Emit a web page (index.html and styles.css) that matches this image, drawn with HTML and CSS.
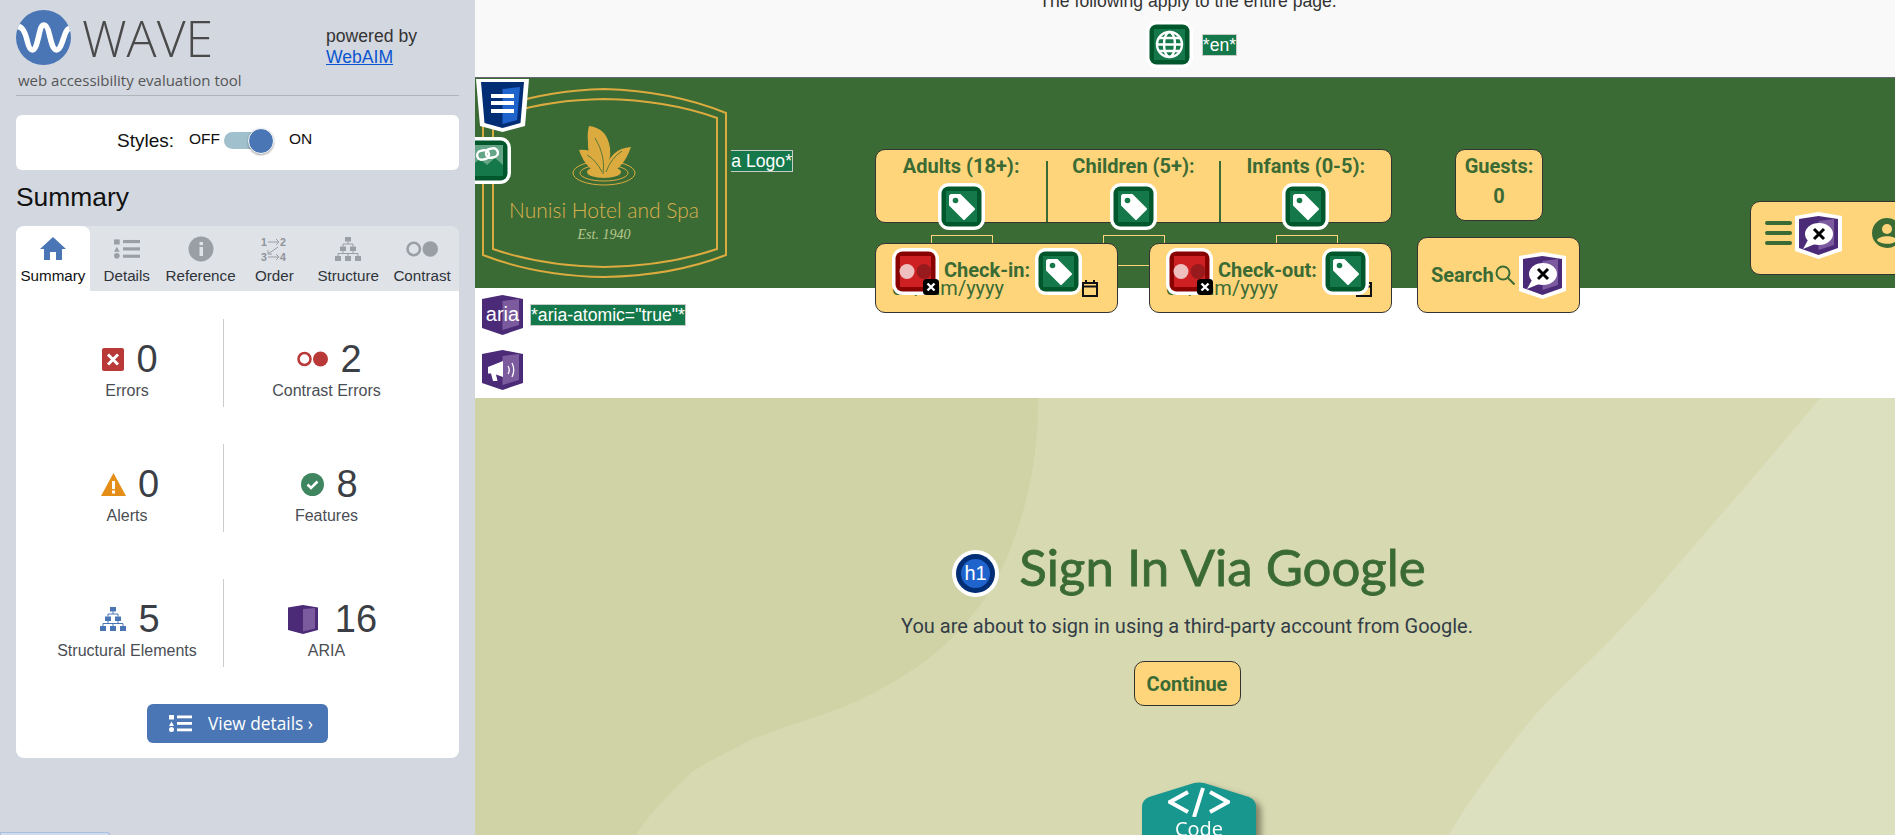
FILE: index.html
```html
<!DOCTYPE html>
<html lang="en">
<head>
<meta charset="utf-8">
<title>Sign In Via Google - WAVE</title>
<link rel="stylesheet" href="styles.css">
</head>
<body>
<svg class="defs" width="0" height="0" aria-hidden="true">
  <symbol id="i-tag" viewBox="0 0 47 47">
    <rect width="47" height="47" rx="11" fill="#fff"/>
    <rect x="3.500" y="3.500" width="40" height="40" rx="7" fill="#00572c"/>
    <rect x="8" y="8" width="31" height="31" fill="#15784a"/>
    <path d="M13 12H22L36 26L26 36L12 22V13Z" fill="#fff" stroke="#fff" stroke-width="2" stroke-linejoin="round"/>
    <circle cx="17.500" cy="17.500" r="2.800" fill="#15784a"/>
  </symbol>
  <symbol id="i-globe" viewBox="0 0 47 47">
    <rect width="47" height="47" rx="11" fill="#fff"/>
    <rect x="3.500" y="3.500" width="40" height="40" rx="7" fill="#00572c"/>
    <rect x="8" y="8" width="31" height="31" fill="#15784a"/>
    <g fill="none" stroke="#fff" stroke-width="2.400">
      <circle cx="23.500" cy="23.500" r="12.500"/>
      <ellipse cx="23.500" cy="23.500" rx="5.500" ry="12.500"/>
      <path d="M11 23.500H36M13 17H34M13 30H34"/>
    </g>
  </symbol>
  <symbol id="i-link" viewBox="0 0 47 47">
    <rect width="47" height="47" rx="11" fill="#fff"/>
    <rect x="3.500" y="3.500" width="40" height="40" rx="7" fill="#00572c"/>
    <rect x="8" y="8" width="31" height="31" fill="#15784a"/>
    <path d="M8 8H39V28L31 21L23 28L16 22L8 28Z" fill="#63a586"/>
    <g fill="none" stroke="#fff" stroke-width="2.400" transform="rotate(-12 23.500 17)">
      <rect x="13" y="12.500" width="12" height="9" rx="4.500"/>
      <rect x="22" y="12.500" width="12" height="9" rx="4.500"/>
    </g>
  </symbol>
  <symbol id="i-contrast" viewBox="0 0 47 47">
    <rect width="47" height="47" rx="11" fill="#fff"/>
    <rect x="3.500" y="3.500" width="40" height="40" rx="7" fill="#890202"/>
    <rect x="8" y="8" width="31" height="31" fill="#ce2022"/>
    <circle cx="15" cy="23.500" r="7.500" fill="#efbfc0"/>
    <circle cx="32" cy="23.500" r="7.500" fill="#981a1c"/>
  </symbol>
  <symbol id="i-x" viewBox="0 0 16 16">
    <rect width="16" height="16" rx="3.500" fill="#000"/>
    <path d="M4.500 4.500L11.500 11.500M11.500 4.500L4.500 11.500" stroke="#fff" stroke-width="2.400"/>
  </symbol>
  <symbol id="i-discern" viewBox="0 0 47 47">
    <path d="M0 4L23.500 0L47 4V39L23.500 47L0 39Z" fill="#fff"/>
    <path d="M4 7L23.500 4L43 7V36L23.500 43L4 36Z" fill="#4b2a78"/>
    <path d="M23.500 9L39 7V33L23.500 38Z" fill="#7b5a9e"/>
    <ellipse cx="24" cy="22" rx="14" ry="11" fill="#fff"/>
    <path d="M13 28L8 37L20 32Z" fill="#fff"/>
    <path d="M19 17L29 27M29 17L19 27" stroke="#000" stroke-width="3"/>
  </symbol>
  <symbol id="i-box" viewBox="0 0 41 40">
    <path d="M0 4L20.500 0L41 4V33L20.500 40L0 33Z" fill="#4b2a78"/>
    <path d="M20.500 6L37 4V30L20.500 35Z" fill="#7b5a9e"/>
  </symbol>
  <symbol id="i-list" viewBox="0 0 23 17">
    <rect x="0" y="0" width="5" height="4.500" fill="currentColor"/>
    <path d="M2.500 6.500L5 11H0Z" fill="currentColor"/>
    <circle cx="2.500" cy="14.500" r="2.500" fill="currentColor"/>
    <rect x="8" y="0.500" width="15" height="2.800" fill="currentColor"/>
    <rect x="8" y="7" width="15" height="2.800" fill="currentColor"/>
    <rect x="8" y="13.500" width="15" height="2.800" fill="currentColor"/>
  </symbol>
  <symbol id="i-struct" viewBox="0 0 26 24">
    <g fill="currentColor">
      <rect x="10" y="0" width="6" height="4.500"/>
      <rect x="5" y="9.500" width="6" height="4.500"/>
      <rect x="15" y="9.500" width="6" height="4.500"/>
      <rect x="0" y="19" width="6" height="5"/>
      <rect x="10" y="19" width="6" height="5"/>
      <rect x="20" y="19" width="6" height="5"/>
    </g>
    <path d="M13 4.500V7M8 9.500V7H18V9.500M8 14V16.500M18 14V16.500M3 19V16.500H23V19M13 16.500V19" fill="none" stroke="currentColor" stroke-width="1"/>
  </symbol>
</svg>

<aside class="wave">
  <header class="wave-head">
    <svg class="wave-logo" viewBox="0 0 55 55" aria-hidden="true">
      <defs><clipPath id="circle-clip"><circle cx="27.500" cy="27.500" r="27.500"/></clipPath></defs>
      <circle cx="27.500" cy="27.500" r="27.500" fill="#4a76b5"/>
      <path clip-path="url(#circle-clip)" d="M0 17C6 15 9 22 11 30C12.500 37 14 40 16.500 40C19.500 40 21 33 23 25C24.500 18 25.500 15 28 15C30.500 15 32 18 33.500 25C35.500 33 37 40 40.500 40C44 40 46 33 48 27C50 20 52 18 56 18" fill="none" stroke="#fff" stroke-width="5.500"/>
    </svg>
    <span class="wave-name">WAVE</span>
    <p class="powered">powered by<br><a href="#">WebAIM</a></p>
  </header>
  <p class="tagline">web accessibility evaluation tool</p>

  <section class="styles-card">
    <span class="styles-label">Styles:</span>
    <span class="off">OFF</span>
    <span class="toggle"><span class="knob"></span></span>
    <span class="on">ON</span>
  </section>

  <h2 class="summary-title">Summary</h2>

  <nav class="tabs">
    <a class="tab tab-active">
      <svg class="tab-icon" viewBox="0 0 26 24"><path d="M13 0L26 12H22V23H16V15H10V23H4V12H0Z" fill="currentColor"/></svg>
      Summary
    </a>
    <a class="tab"><svg class="tab-icon"><use href="#i-list"/></svg>Details</a>
    <a class="tab">
      <svg class="tab-icon" viewBox="0 0 26 26"><circle cx="13" cy="13" r="12.500" fill="currentColor"/><rect x="11.500" y="11" width="3.500" height="9" fill="#dfe2e7"/><rect x="11.500" y="6" width="3.500" height="3.200" fill="#dfe2e7"/></svg>
      Reference
    </a>
    <a class="tab">
      <svg class="tab-icon" viewBox="0 0 26 26">
        <text class="order-digits" x="0" y="10">1</text><text class="order-digits" x="19" y="10">2</text>
        <text class="order-digits" x="0" y="25">3</text><text class="order-digits" x="19" y="25">4</text>
        <path d="M7 6H18M15 3L18 6L15 9M7 21H18M15 18L18 21L15 24M17 11L7 18M7 14V18H11" fill="none" stroke="currentColor" stroke-width="1"/>
      </svg>
      Order
    </a>
    <a class="tab"><svg class="tab-icon"><use href="#i-struct"/></svg>Structure</a>
    <a class="tab">
      <svg class="tab-icon tab-icon-wide" viewBox="0 0 31 16"><circle cx="7.500" cy="8" r="6" fill="none" stroke="currentColor" stroke-width="2.500"/><circle cx="23.500" cy="8" r="7.500" fill="currentColor"/></svg>
      Contrast
    </a>
  </nav>

  <section class="stats">
    <div class="stat-row">
      <div class="stat">
        <div class="figure">
          <svg class="stat-icon" width="22" height="23" viewBox="0 0 22 23"><rect width="22" height="23" rx="2" fill="#b93838"/><path d="M6 6.500L16 16.500M16 6.500L6 16.500" stroke="#fff" stroke-width="3"/></svg>
          <span class="num">0</span>
        </div>
        <span class="stat-label">Errors</span>
      </div>
      <div class="stat stat-right">
        <div class="figure">
          <svg class="stat-icon" width="31" height="16" viewBox="0 0 31 16"><circle cx="7.500" cy="8" r="6" fill="none" stroke="#b93838" stroke-width="2.500"/><circle cx="23.500" cy="8" r="7.500" fill="#b93838"/></svg>
          <span class="num">2</span>
        </div>
        <span class="stat-label">Contrast Errors</span>
      </div>
    </div>
    <div class="stat-row stat-row-wide">
      <div class="stat">
        <div class="figure">
          <svg class="stat-icon" width="25" height="23" viewBox="0 0 25 23"><path d="M12.500 0L25 23H0Z" fill="#e58e17"/><rect x="11" y="8" width="3" height="8" fill="#fff"/><rect x="11" y="17.500" width="3" height="3" fill="#fff"/></svg>
          <span class="num">0</span>
        </div>
        <span class="stat-label">Alerts</span>
      </div>
      <div class="stat stat-right">
        <div class="figure">
          <svg class="stat-icon" width="23" height="23" viewBox="0 0 23 23"><circle cx="11.500" cy="11.500" r="11.500" fill="#3f8560"/><path d="M6.500 11.500L10 15L16.500 8.500" fill="none" stroke="#fff" stroke-width="2.500"/></svg>
          <span class="num">8</span>
        </div>
        <span class="stat-label">Features</span>
      </div>
    </div>
    <div class="stat-row">
      <div class="stat">
        <div class="figure">
          <svg class="stat-icon stat-struct" width="26" height="24"><use href="#i-struct"/></svg>
          <span class="num">5</span>
        </div>
        <span class="stat-label">Structural Elements</span>
      </div>
      <div class="stat stat-right">
        <div class="figure figure-aria">
          <svg class="stat-icon" width="30" height="29" viewBox="0 0 30 29"><path d="M0 2.500L15 0L30 2.500V25L15 29L0 25Z" fill="#4b2a78"/><path d="M15 4L27 3V23.500L15 26.500Z" fill="#7b5a9e"/></svg>
          <span class="num">16</span>
        </div>
        <span class="stat-label">ARIA</span>
      </div>
    </div>
    <a class="details-btn">
      <svg class="details-icon"><use href="#i-list"/></svg>
      View details ›
    </a>
  </section>
  <div class="peek-tab"></div>
</aside>

<main class="page">
  <section class="page-note">
    <p class="note-text">The following apply to the entire page.</p>
    <div class="note-row">
      <svg class="wicon"><use href="#i-globe"/></svg>
      <span class="wlabel">*en*</span>
    </div>
  </section>

  <header class="site-header">
    <div class="brand">
      <svg class="hotel-logo" viewBox="0 0 245 190" role="img" aria-label="Nunisi Hotel and Spa Logo">
        <g fill="none" stroke="#dcab3f" stroke-width="2">
          <path d="M122 1Q190 3 244 25V167Q190 188 122 189Q55 188 1 167V25Q55 3 122 1Z"/>
          <path d="M122 11Q185 12 235 30V161Q185 178 122 179Q60 178 11 161V30Q60 12 122 11Z"/>
          <ellipse cx="122" cy="85" rx="31" ry="12" stroke-width="1"/>
          <ellipse cx="122" cy="85" rx="24" ry="8" stroke-width="1"/>
        </g>
        <g fill="#dcab3f">
          <ellipse cx="122" cy="84" rx="17" ry="6"/>
          <path d="M107 38Q125 40 128 60Q130 75 120 85Q105 70 106 55Q105 45 107 38Z"/>
          <path d="M97 62Q118 60 122 85Q105 85 97 62Z"/>
          <path d="M149 59Q128 60 122 85Q140 85 149 59Z"/>
        </g>
        <path d="M113 50Q124 68 121 86M105 67Q114 72 120 84M140 63Q129 70 124 84" fill="none" stroke="#3b6b35" stroke-width=".8"/>
        <text class="logo-name" x="122" y="130">Nunisi Hotel and Spa</text>
        <text class="logo-est" x="122" y="151">Est. 1940</text>
      </svg>
      <svg class="doc-icon" viewBox="0 0 53 53" aria-hidden="true">
        <path d="M0 0H53L49 47L26.500 53L4 47Z" fill="#fff"/>
        <path d="M5 3H48L44.500 44L26.500 49L8.500 44Z" fill="#002d74"/>
        <path d="M26.500 10L44 8L41 41L26.500 45Z" fill="#1f63cc"/>
        <g fill="#fff"><rect x="15" y="15" width="23" height="4"/><rect x="15" y="22" width="23" height="4"/><rect x="15" y="30" width="23" height="4"/></g>
      </svg>
      <svg class="wicon link-icon"><use href="#i-link"/></svg>
      <span class="wlabel logo-label">*Nunisi Hotel and Spa Logo*</span>
    </div>

    <form class="booking">
      <div class="booking-top">
        <div class="box counts">
          <div class="count">
            <span class="field-label">Adults (18+):</span>
            <svg class="wicon count-icon"><use href="#i-tag"/></svg>
            <span class="connector"></span>
          </div>
          <span class="count-sep"></span>
          <div class="count">
            <span class="field-label">Children (5+):</span>
            <svg class="wicon count-icon"><use href="#i-tag"/></svg>
            <span class="connector"></span>
          </div>
          <span class="count-sep"></span>
          <div class="count">
            <span class="field-label">Infants (0-5):</span>
            <svg class="wicon count-icon"><use href="#i-tag"/></svg>
            <span class="connector"></span>
          </div>
        </div>
        <div class="box guests">
          <span class="field-label">Guests:</span>
          <span class="field-label guests-num">0</span>
        </div>
      </div>
      <div class="booking-bottom">
        <div class="box date">
          <div class="date-head">
            <span class="contrast-wrap">
              <svg class="wicon"><use href="#i-contrast"/></svg>
              <svg class="x-badge"><use href="#i-x"/></svg>
            </span>
            <span class="field-label date-label">Check-in:</span>
            <svg class="wicon"><use href="#i-tag"/></svg>
          </div>
          <div class="date-value">
            <span>dd/mm/yyyy</span>
            <svg class="calendar" viewBox="0 0 16 18"><path d="M1 4H15V17H1ZM1 7.500H15M4 1V4M12 1V4" fill="none" stroke="#111" stroke-width="2"/></svg>
          </div>
        </div>
        <span class="date-link"></span>
        <div class="box date">
          <div class="date-head">
            <span class="contrast-wrap">
              <svg class="wicon"><use href="#i-contrast"/></svg>
              <svg class="x-badge"><use href="#i-x"/></svg>
            </span>
            <span class="field-label date-label">Check-out:</span>
            <svg class="wicon"><use href="#i-tag"/></svg>
          </div>
          <div class="date-value">
            <span>dd/mm/yyyy</span>
            <svg class="calendar" viewBox="0 0 16 18"><path d="M1 4H15V17H1ZM1 7.500H15M4 1V4M12 1V4" fill="none" stroke="#111" stroke-width="2"/></svg>
          </div>
        </div>
        <div class="box search">
          <span class="field-label">Search</span>
          <svg class="magnifier" viewBox="0 0 20 20"><circle cx="8" cy="8" r="6.500" fill="none" stroke="#3b6b35" stroke-width="2"/><path d="M12.500 12.500L19.500 19.500" stroke="#3b6b35" stroke-width="2"/></svg>
          <svg class="wicon"><use href="#i-discern"/></svg>
        </div>
      </div>
    </form>

    <div class="box menu">
      <span class="burger"><i></i><i></i><i></i></span>
      <svg class="wicon menu-flag"><use href="#i-discern"/></svg>
      <svg class="user" viewBox="0 0 30 30"><circle cx="15" cy="15" r="15" fill="#3b6b35"/><circle cx="15" cy="11" r="5" fill="#fed57a"/><path d="M5 22C8 17 22 17 25 22C22 27 8 27 5 22Z" fill="#fed57a"/></svg>
    </div>
  </header>

  <section class="notices">
    <div class="notice">
      <svg class="box-icon" viewBox="0 0 41 40"><use href="#i-box"/><text class="aria-word" x="20.500" y="26">aria</text></svg>
      <span class="wlabel">*aria-atomic="true"*</span>
    </div>
    <div class="notice">
      <svg class="box-icon" viewBox="0 0 41 40">
        <use href="#i-box"/>
        <path d="M6 17L21 11V27L14 24.500L15.500 31H11L9 23.500H6Z" fill="#fff"/>
        <path d="M26 16Q28.500 20 26 24M30 13Q33.500 20 30 27" fill="none" stroke="#fff" stroke-width="1.300"/>
      </svg>
    </div>
  </section>

  <section class="signin">
    <svg class="signin-bg" viewBox="0 0 1420 437" preserveAspectRatio="none" aria-hidden="true">
      <rect width="1420" height="437" fill="#d7d9b1"/>
      <path d="M0 0H563C564 45 556 85 548 114C530 175 510 205 480 237C450 268 410 290 380 304C345 320 300 330 272 344C245 358 230 365 217 374C195 395 175 415 161 437H0Z" fill="#d0d3a5"/>
      <path d="M1345 0C1300 55 1230 135 1177 197C1135 245 1090 285 1060 317C1025 360 995 400 974 437H1420V0Z" fill="#dde0bf"/>
    </svg>
    <div class="signin-body">
      <div class="title-row">
        <svg class="h1-icon" viewBox="0 0 47 47" aria-hidden="true">
          <circle cx="23.500" cy="23.500" r="23.500" fill="#fff"/>
          <circle cx="23.500" cy="23.500" r="19.500" fill="#002d74"/>
          <circle cx="23.500" cy="23.500" r="14.500" fill="#1f63cc"/>
          <text class="h1-word" x="23.500" y="30">h1</text>
        </svg>
        <h1 class="title">Sign In Via Google</h1>
      </div>
      <p class="lead">You are about to sign in using a third-party account from Google.</p>
      <a class="box continue">Continue</a>
    </div>
    <div class="code-badge">
      <svg class="code-glyph" viewBox="0 0 62 30" aria-hidden="true"><path d="M20 5L2 15L20 25M42 5L60 15L42 25M35 1L26 30" fill="none" stroke="#fff" stroke-width="4"/></svg>
      <span class="code-word">Code</span>
    </div>
  </section>
</main>
</body>
</html>
```

FILE: styles.css
```css
* { box-sizing: border-box; }
html, body { margin: 0; height: 100%; }
body {
  width: 1895px;
  height: 835px;
  display: flex;
  overflow: hidden;
  font-family: "Liberation Sans", Arial, sans-serif;
  color: #333;
  background: #fff;
}
.defs { position: absolute; }
p, h1, h2 { margin: 0; font-weight: 400; }

/* WAVE sidebar */
.wave {
  width: 475px;
  flex: none;
  height: 835px;
  padding: 0 16px;
  background: #d3d8e0;
  position: relative;
}
.wave-head { display: flex; height: 70px; padding-top: 10px; }
.wave-logo { width: 55px; height: 55px; flex: none; }
.wave-name {
  font-family: "Open Sans", sans-serif;
  font-weight: 300;
  font-size: 50px;
  line-height: 50px;
  margin: 3px 0 0 11px;
  width: 244px;
  color: #4a4a4a;
  flex: none;
}
.powered { font-size: 17.6px; line-height: 21px; padding-top: 16px; color: #333; }
.powered a { color: #0b55d0; }
.tagline {
  font-family: "Open Sans", sans-serif;
  font-size: 15px;
  line-height: 20px;
  height: 26px;
  padding-left: 2px;
  color: #555;
  border-bottom: 1px solid #b0b5bb;
}
.styles-card {
  margin-top: 19px;
  height: 55px;
  background: #fff;
  border-radius: 6px;
  display: flex;
  align-items: center;
  padding-left: 101px;
  color: #111;
  padding-bottom: 4px;
}
.styles-label { font-size: 19px; width: 57px; }
.off { margin-left: 15px; width: 30px; font-size: 15.5px; margin-top: -3px; }
.on { margin-left: 15px; font-size: 15.5px; margin-top: -3px; }
.toggle {
  margin-left: 5px;
  width: 50px;
  height: 26px;
  position: relative;
}
.toggle::before {
  content: "";
  position: absolute;
  left: 0;
  top: 4px;
  width: 39px;
  height: 17px;
  border-radius: 9px;
  background: #9fc0cc;
}
.knob {
  position: absolute;
  right: 0;
  top: 0;
  width: 26px;
  height: 26px;
  border-radius: 50%;
  background: #4a76b5;
  border: 1px solid #fff;
  box-shadow: 0 1px 2px rgba(0, 0, 0, .35);
}
.summary-title { font-size: 26.4px; line-height: 30px; margin-top: 12px; color: #111; }
.tabs {
  margin-top: 14px;
  height: 65px;
  display: grid;
  grid-template-columns: repeat(6, 1fr);
  background: #dfe2e7;
  border-radius: 8px 8px 0 0;
}
.tab {
  display: flex;
  flex-direction: column;
  align-items: center;
  padding-top: 10px;
  font-size: 15.2px;
  line-height: 18px;
  color: #2f343a;
  white-space: nowrap;
}
.tab-icon { width: 26px; height: 26px; color: #9a9ea5; margin-bottom: 5px; display: block; flex: none; }
.tab-icon-wide { width: 32px; }
.tab-active { background: #fff; color: #111; border-radius: 8px 8px 0 0; }
.tab-active .tab-icon { color: #4a76b5; }
.order-digits { font: 700 10.5px "Liberation Sans", Arial, sans-serif; fill: #8e9299; }

.stats {
  background: #fff;
  border-radius: 0 0 8px 8px;
  height: 467px;
  padding-top: 28px;
  display: flex;
  flex-direction: column;
}
.stat-row {
  margin-left: 15px;
  height: 88px;
  display: grid;
  grid-template-columns: 192px 206px;
  margin-bottom: 37px;
}
.stat-row-wide { margin-bottom: 47px; }
.stat { display: flex; flex-direction: column; align-items: center; padding-top: 20px; }
.stat-right { border-left: 1px solid #ccc; }
.figure { display: flex; align-items: center; gap: 12px; height: 40px; padding-left: 6px; }
.figure-aria { gap: 17px; padding-left: 12px; }
.num { font-size: 38px; line-height: 40px; color: #3b3f45; }
.stat-label { font-size: 16px; line-height: 20px; margin-top: 2px; color: #4a4e54; white-space: nowrap; }
.stat-struct { color: #4a76b5; }
.stat-icon { display: block; }
.details-btn {
  align-self: flex-start;
  margin-left: 131px;
  width: 181px;
  height: 39px;
  background: #4a76b5;
  border-radius: 6px;
  color: #fff;
  font-family: "Open Sans", sans-serif;
  font-size: 17.3px;
  display: flex;
  align-items: center;
  padding-left: 22px;
  gap: 16px;
}
.details-icon { width: 23px; height: 17px; color: #fff; }
.peek-tab {
  position: absolute;
  left: 0;
  bottom: 0;
  width: 110px;
  height: 3px;
  background: #d3dcec;
  border: 1px solid #a7bfe0;
  border-bottom: 0;
  border-radius: 0 4px 0 0;
}

/* Page under test */
.page {
  flex: 1;
  min-width: 0;
  height: 835px;
  overflow: hidden;
  display: flex;
  flex-direction: column;
  font-family: Roboto, sans-serif;
}
.page-note {
  height: 77px;
  flex: none;
  background: #f9f9f9;
  display: flex;
  flex-direction: column;
  align-items: center;
  padding-left: 6px;
  font-family: "Liberation Sans", Arial, sans-serif;
}
.note-text { font-size: 17.6px; line-height: 20px; margin-top: -9px; color: #333; }
.note-row { display: flex; align-items: center; gap: 9px; margin: 10px 0 0 7px; }
.wicon { width: 47px; height: 47px; display: block; flex: none; }
.wlabel {
  background: #15784a;
  border: 1px solid #c8ccc8;
  color: #fff;
  font-family: "Liberation Sans", Arial, sans-serif;
  font-size: 17.6px;
  line-height: 20px;
  white-space: nowrap;
}

.site-header {
  flex: none;
  height: 211px;
  background: #3b6b35;
  border-top: 1px solid #667;
  display: flex;
  align-items: flex-start;
  position: relative;
  z-index: 1;
}
.brand { position: relative; flex: none; width: 250px; margin: 10px 0 0 7px; height: 190px; }
.hotel-logo { width: 245px; height: 190px; display: block; }
.logo-name { font-family: Lato, sans-serif; font-weight: 300; font-size: 21px; fill: #dcb04c; text-anchor: middle; }
.logo-est { font-family: "Liberation Serif", serif; font-style: italic; font-size: 14px; fill: #b7c78d; text-anchor: middle; }
.doc-icon { position: absolute; left: -6px; top: -9px; width: 53px; height: 53px; }
.link-icon { position: absolute; left: -18px; top: 49px; }
.logo-label {
  position: absolute;
  left: 249px;
  top: 62px;
  width: 62px;
  height: 22px;
  border-left: 0;
  display: flex;
  justify-content: flex-end;
  overflow: hidden;
}

.booking { flex: none; margin: 71px 0 0 143px; width: 705px; }
.box {
  background: #fed57a;
  border: 1px solid #333;
  border-radius: 10px;
  color: #3b6b35;
}
.field-label { font-size: 20px; font-weight: 700; line-height: 22px; color: #3b6b35; white-space: nowrap; }
.booking-top { display: flex; align-items: flex-start; height: 74px; }
.counts { width: 517px; height: 74px; display: flex; }
.count { flex: 1; display: flex; flex-direction: column; align-items: center; padding-top: 5px; position: relative; }
.count-sep { width: 2px; height: 61px; align-self: flex-end; background: #3b6b35; }
.count-icon { margin-top: 6px; }
.connector {
  position: absolute;
  left: calc(50% - 30px);
  top: 85px;
  width: 62px;
  height: 8px;
  border: 1px solid #fed57a;
  border-bottom: 0;
}
.guests {
  margin-left: 63px;
  width: 88px;
  height: 72px;
  display: flex;
  flex-direction: column;
  align-items: center;
  padding-top: 5px;
  gap: 8px;
}
.booking-bottom { display: flex; align-items: flex-end; height: 76px; margin-top: 14px; }
.date { width: 243px; height: 70px; padding: 4px 19px 0 16px; }
.date-head { display: flex; align-items: center; gap: 5px; position: relative; z-index: 1; }
.date-label { margin-top: -4px; }
.contrast-wrap { position: relative; display: block; }
.x-badge { position: absolute; right: 0; bottom: 0; width: 16px; height: 16px; }
.date-value {
  display: flex;
  align-items: center;
  justify-content: space-between;
  margin-top: -19px;
  font-size: 20px;
  line-height: 24px;
  color: #3b6b35;
}
.calendar { width: 16px; height: 18px; }
.date-link { width: 31px; height: 1px; background: #fed57a; margin-bottom: 47px; }
.search {
  margin-left: 25px;
  width: 163px;
  height: 76px;
  display: flex;
  align-items: center;
  padding-left: 13px;
}
.magnifier { width: 20px; height: 20px; margin: 0 4px 0 1px; flex: none; }
.menu {
  flex: none;
  margin: 123px 0 0 170px;
  width: 220px;
  height: 74px;
  display: flex;
  align-items: center;
  padding: 0 0 10px 14px;
}
.burger { display: flex; flex-direction: column; gap: 6px; width: 27px; flex: none; }
.burger i { display: block; height: 4px; border-radius: 2px; background: #3b6b35; }
.menu-flag { margin: 5px 0 0 3px; }
.user { width: 30px; height: 30px; margin-left: 30px; flex: none; }

.notices {
  flex: none;
  height: 110px;
  background: #fff;
  padding: 7px 0 0 7px;
  display: flex;
  flex-direction: column;
  gap: 15px;
}
.notice { display: flex; align-items: center; gap: 7px; }
.box-icon { width: 41px; height: 40px; display: block; }
.aria-word { font-family: "Liberation Sans", Arial, sans-serif; font-size: 20px; fill: #fff; text-anchor: middle; }

.signin { flex: 1; position: relative; overflow: hidden; }
.signin-bg { position: absolute; inset: 0; width: 100%; height: 100%; display: block; }
.signin-body {
  position: relative;
  display: flex;
  flex-direction: column;
  align-items: center;
  padding: 150px 0 0 4px;
}
.title-row { display: flex; align-items: center; gap: 20px; height: 50px; margin-left: 4px; }
.h1-icon { width: 47px; height: 47px; flex: none; }
.h1-word { font-family: "Liberation Sans", Arial, sans-serif; font-size: 20px; fill: #fff; text-anchor: middle; }
.title {
  font-family: Lato, sans-serif;
  font-size: 51px;
  line-height: 50px;
  margin-top: -12px;
  color: #3b6b35;
  -webkit-text-stroke: .8px #3b6b35;
}
.lead { margin-top: 15px; font-size: 20px; line-height: 26px; color: #333d47; }
.continue {
  margin-top: 22px;
  width: 107px;
  height: 45px;
  display: flex;
  align-items: center;
  justify-content: center;
  font-size: 20px;
  font-weight: 700;
}
.code-badge {
  position: absolute;
  left: 667px;
  top: 384px;
  width: 114px;
  height: 70px;
  filter: drop-shadow(5px 4px 3px rgba(60, 60, 40, .55));
  display: flex;
  flex-direction: column;
  align-items: center;
  padding-top: 5px;
}
.code-badge::before {
  content: "";
  position: absolute;
  inset: 0;
  background: #18978f;
  clip-path: path("M0 25Q0 18 7 15L52 1Q57 0 62 1L107 15Q114 18 114 25V70H0Z");
}
.code-glyph { position: relative; width: 62px; height: 30px; display: block; }
.code-word { position: relative; font-family: "Open Sans", sans-serif; font-size: 20px; line-height: 24px; color: #fff; }
```
